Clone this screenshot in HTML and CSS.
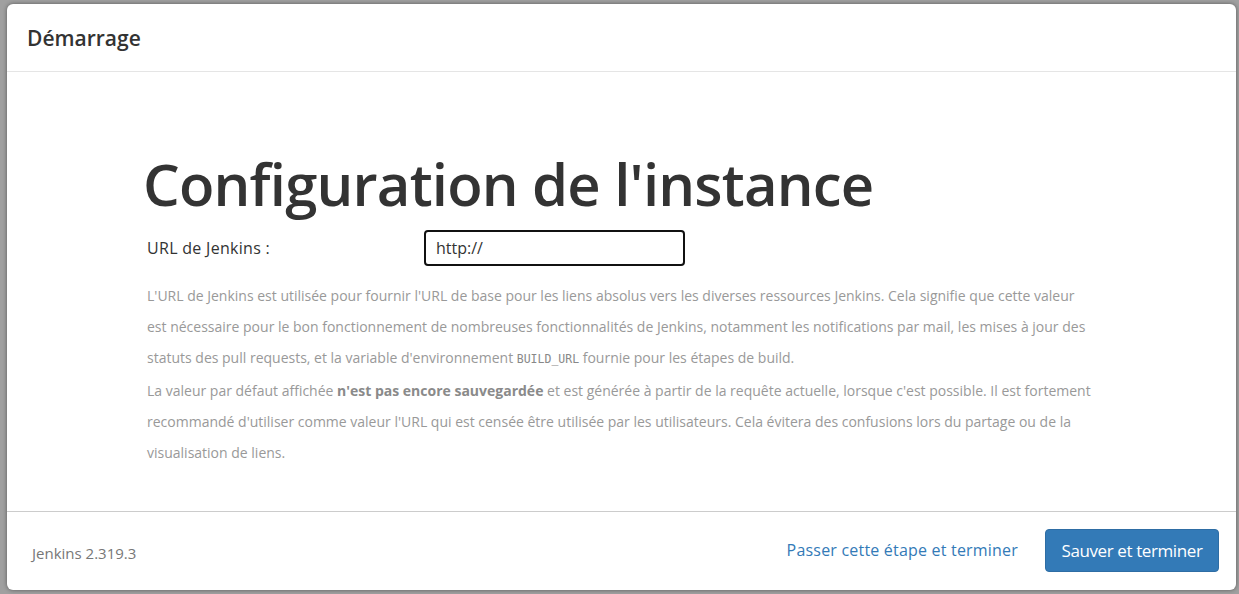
FILE: index.html
```html
<!DOCTYPE html>
<html lang="fr">
<head>
<meta charset="utf-8">
<title>Démarrage</title>
<link rel="stylesheet" href="styles.css">
</head>
<body>
<div class="modal">
  <div class="modal-header">
    <h4 class="modal-title">Démarrage</h4>
  </div>
  <div class="modal-body">
    <div class="config">
      <h1 class="config-title">Configuration de l'instance</h1>
      <div class="form-row">
        <label class="form-label" for="url">URL de Jenkins :</label>
        <input class="form-input" id="url" type="text" value="http://">
      </div>
      <div class="help">
        <p>L'URL de Jenkins est utilisée pour fournir l'URL de base pour les liens absolus vers les diverses ressources Jenkins. Cela signifie que cette valeur est nécessaire pour le bon fonctionnement de nombreuses fonctionnalités de Jenkins, notamment les notifications par mail, les mises à jour des statuts des pull requests, et la variable d'environnement <code>BUILD_URL</code> fournie pour les étapes de build.</p>
        <p>La valeur par défaut affichée <strong>n'est pas encore sauvegardée</strong> et est générée à partir de la requête actuelle, lorsque c'est possible. Il est fortement recommandé d'utiliser comme valeur l'URL qui est censée être utilisée par les utilisateurs. Cela évitera des confusions lors du partage ou de la visualisation de liens.</p>
      </div>
    </div>
  </div>
  <div class="modal-footer">
    <div class="version">Jenkins 2.319.3</div>
    <div class="actions">
      <a class="skip-link" href="#">Passer cette étape et terminer</a>
      <button class="btn-primary" type="button">Sauver et terminer</button>
    </div>
  </div>
</div>
</body>
</html>
```
FILE: styles.css
```css
* { box-sizing: border-box; }
html, body { height: 100%; }
body {
  margin: 0;
  padding: 4px 3px 4px 7px;
  background: #a0a0a0;
  font-family: "Open Sans", "Noto Sans", sans-serif;
  color: #333;
}
.modal {
  height: 586px;
  background: #fff;
  border-radius: 6px;
  box-shadow: 0 0 4px rgba(0,0,0,0.45);
  display: flex;
  flex-direction: column;
}
.modal-header {
  height: 68px;
  padding: 0 20px;
  display: flex;
  align-items: center;
  border-bottom: 1px solid #e5e5e5;
  flex: none;
}
.modal-title {
  margin: 0;
  font-size: 21px;
  font-weight: 600;
  color: #333;
}
.modal-body {
  flex: 1;
  padding: 80px 0 0 140px;
}
.config { width: 945px; }
.config-title {
  margin: 0 0 14px -4px;
  font-size: 58px;
  line-height: 64px;
  font-weight: 600;
  letter-spacing: -0.8px;
  color: #333;
}
.form-row {
  display: flex;
  align-items: center;
  height: 36px;
  margin-bottom: 14px;
}
.form-label {
  width: 277px;
  font-size: 16px;
  letter-spacing: 0.3px;
  color: #333;
  flex: none;
}
.form-input {
  width: 261px;
  height: 36px;
  border: 2px solid #111;
  border-radius: 4px;
  padding: 0 10px;
  font-family: inherit;
  font-size: 16px;
  color: #333;
  outline: none;
}
.help {
  font-size: 14px;
  line-height: 31px;
  color: #999;
}
.help p { margin: 0; }
.help strong { font-weight: 700; color: #8a8a8a; }
.help code {
  font-family: "DejaVu Sans Mono", monospace;
  font-size: 11.5px;
  color: #888;
}
.modal-footer {
  flex: none;
  height: 79px;
  border-top: 1px solid #ccc;
  padding: 0 17px 2px 25px;
  display: flex;
  align-items: center;
  justify-content: space-between;
}
.version {
  font-size: 15px;
  color: #777;
  padding-top: 5px;
}
.actions {
  display: flex;
  align-items: center;
  gap: 27px;
}
.skip-link {
  font-size: 16px;
  color: #337ab7;
  text-decoration: none;
  letter-spacing: 0.2px;
}
.btn-primary {
  height: 43px;
  width: 174px;
  border: 1px solid #2e6da4;
  border-radius: 4px;
  background: #337ab7;
  color: #fff;
  font-family: inherit;
  font-size: 17px;
  letter-spacing: -0.4px;
  padding: 0;
}
```
